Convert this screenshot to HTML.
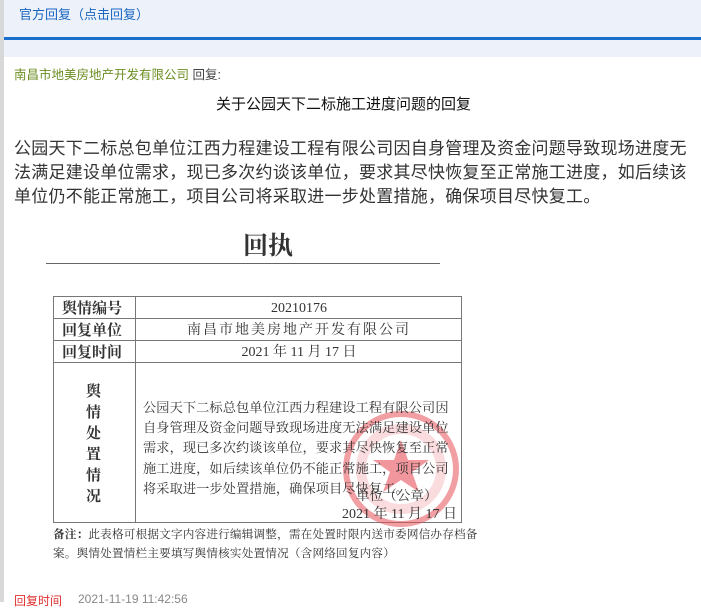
<!DOCTYPE html>
<html><head><meta charset="utf-8"><style>
*{margin:0;padding:0;box-sizing:border-box}
body{width:701px;height:602px;overflow:hidden;background:#fff;font-family:"Liberation Sans","Noto Sans CJK SC",sans-serif;position:relative}
.a{position:absolute;white-space:nowrap}
.s{font-family:"Liberation Serif","Noto Serif CJK SC",serif;color:#333}
</style></head><body>
<div class="a" style="left:0;top:0;width:4px;height:602px;background:#d8d8d8"></div>
<div class="a" style="left:4px;top:0;width:697px;height:37px;background:#edf2fa"></div>
<div class="a" style="left:19px;top:4px;font-size:13px;color:#1a66c0">官方回复（点击回复）</div>
<div class="a" style="left:4px;top:37px;width:697px;height:3px;background:#1a6fcc"></div>
<div class="a" style="left:4px;top:40px;width:697px;height:17px;background:#edf2fa"></div>
<div class="a" style="left:14px;top:64px;font-size:12.5px;color:#6b8e23">南昌市地美房地产开发有限公司 <span style="color:#444">回复:</span></div>
<div class="a" style="left:216px;top:93px;font-size:15px;color:#111">关于公园天下二标施工进度问题的回复</div>
<div class="a" style="left:14px;top:137px;font-size:17px;line-height:24px;color:#333;letter-spacing:.25px">公园天下二标总包单位江西力程建设工程有限公司因自身管理及资金问题导致现场进度无<br>法满足建设单位需求，现已多次约谈该单位，要求其尽快恢复至正常施工进度，如后续该<br>单位仍不能正常施工，项目公司将采取进一步处置措施，确保项目尽快复工。</div>
<div class="a s" style="left:243px;top:226px;font-size:25px;font-weight:bold;color:#333">回执</div>
<div class="a" style="left:46px;top:263px;width:394px;height:1px;background:#666"></div>
<div class="a" style="left:53px;top:296px;width:409px;height:227px;border:1px solid #777"></div>
<div class="a" style="left:135px;top:296px;width:1px;height:227px;background:#777"></div>
<div class="a" style="left:53px;top:318px;width:409px;height:1px;background:#777"></div>
<div class="a" style="left:53px;top:340px;width:409px;height:1px;background:#777"></div>
<div class="a" style="left:53px;top:362px;width:409px;height:1px;background:#777"></div>
<div class="a s" style="left:62px;top:298px;font-size:15px;font-weight:bold;line-height:22px">舆情编号<br>回复单位<br>回复时间</div>
<div class="a s" style="left:136px;top:298px;width:326px;text-align:center;font-size:14px;line-height:22px">20210176<br><span style="letter-spacing:2px">南昌市地美房地产开发有限公司</span><br>2021 年 11 月 17 日</div>
<div class="a s" style="left:86px;top:382px;font-size:15px;font-weight:bold;line-height:21px;white-space:normal;width:16px">舆情处置情况</div>
<svg class="a" style="left:340px;top:410px" width="122" height="118"><circle cx="61" cy="59" r="55" fill="none" stroke="#e8505a" stroke-width="6" opacity=".55"/><circle cx="61" cy="59" r="40" fill="none" stroke="#e8505a" stroke-width="10" opacity=".2"/><polygon points="61,30 68,50 89,50 72,62 79,82 61,70 43,82 50,62 33,50 54,50" fill="#e8505a" opacity=".6"/></svg>
<div class="a s" style="left:143px;top:398px;font-size:13.2px;line-height:20.2px;letter-spacing:.1px">公园天下二标总包单位江西力程建设工程有限公司因<br>自身管理及资金问题导致现场进度无法满足建设单位<br>需求，现已多次约谈该单位，要求其尽快恢复至正常<br>施工进度，如后续该单位仍不能正常施工，项目公司<br>将采取进一步处置措施，确保项目尽快复工。</div>
<div class="a s" style="left:356px;top:484px;font-size:13.6px">单位（公章）</div>
<div class="a s" style="left:342px;top:503px;font-size:14px">2021 年 11 月 17 日</div>
<div class="a s" style="left:53px;top:525px;font-size:11.6px;line-height:19px;letter-spacing:.2px"><b>备注：</b>此表格可根据文字内容进行编辑调整，需在处置时限内送市委网信办存档备<br>案。舆情处置情栏主要填写舆情核实处置情况（含网络回复内容）</div>
<div class="a" style="left:14px;top:592px;font-size:12px;color:#e03030">回复时间</div>
<div class="a" style="left:78px;top:592px;font-size:12px;color:#888">2021-11-19 11:42:56</div>
</body></html>
